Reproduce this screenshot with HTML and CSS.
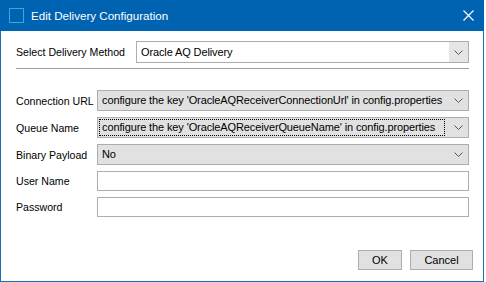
FILE: index.html
```html
<!DOCTYPE html>
<html>
  <head>
    <title>Edit Delivery Configuration</title>
    <link rel="stylesheet" href="styles.css">
  </head>
  <body>
    <div class="window">
      <div class="titlebar">
        <span class="app-icon"></span>
        <span class="title">Edit Delivery Configuration</span>
        <svg class="close" width="11" height="11" viewBox="0 0 11 11">
          <path d="M0.5 0.5 L10.5 10.5 M10.5 0.5 L0.5 10.5" stroke="#fff" stroke-width="1.2" fill="none"/>
        </svg>
      </div>

      <div class="content">
        <div class="method-row">
          <label>Select Delivery Method</label>
          <div class="combo combo-white">
            <span class="combo-text">Oracle AQ Delivery</span>
            <span class="combo-btn">
              <svg width="9" height="5" viewBox="0 0 9 5"><path d="M0.5 0.5 L4.5 4.5 L8.5 0.5" stroke="#555" fill="none"/></svg>
            </span>
          </div>
        </div>

        <div class="separator"></div>

        <div class="fields">
          <label>Connection URL</label>
          <div class="combo">
            <span class="combo-text">configure the key 'OracleAQReceiverConnectionUrl' in config.properties</span>
            <span class="combo-btn">
              <svg width="9" height="5" viewBox="0 0 9 5"><path d="M0.5 0.5 L4.5 4.5 L8.5 0.5" stroke="#555" fill="none"/></svg>
            </span>
          </div>

          <label>Queue Name</label>
          <div class="combo">
            <span class="combo-text focused">configure the key 'OracleAQReceiverQueueName' in config.properties</span>
            <span class="combo-btn">
              <svg width="9" height="5" viewBox="0 0 9 5"><path d="M0.5 0.5 L4.5 4.5 L8.5 0.5" stroke="#555" fill="none"/></svg>
            </span>
          </div>

          <label>Binary Payload</label>
          <div class="combo">
            <span class="combo-text">No</span>
            <span class="combo-btn">
              <svg width="9" height="5" viewBox="0 0 9 5"><path d="M0.5 0.5 L4.5 4.5 L8.5 0.5" stroke="#555" fill="none"/></svg>
            </span>
          </div>

          <label>User Name</label>
          <div class="textbox"></div>

          <label>Password</label>
          <div class="textbox"></div>
        </div>

        <div class="buttons">
          <button class="btn btn-ok">OK</button>
          <button class="btn btn-cancel">Cancel</button>
        </div>
      </div>
    </div>
  </body>
</html>
```

FILE: styles.css
```css
body { margin: 0; background: #fff; font-family: "Liberation Sans", Arial, sans-serif; font-size: 11px; color: #000; }

label { white-space: nowrap; font-size: 10.6px; }

.window {
    width: 484px;
    height: 282px;
    box-sizing: border-box;
    border: 1px solid #1c70b8;
    border-top: none;
    display: flex;
    flex-direction: column;
    background: #fff;
}

.titlebar {
    height: 31px;
    background: #0063b1;
    display: flex;
    align-items: center;
    padding: 0 9px 0 9px;
    margin: 0 -1px;
    color: #fff;
    flex-shrink: 0;
}
.app-icon {
    width: 13px;
    height: 13px;
    border: 1px solid #2fb0cf;
    margin-right: 7px;
    margin-top: -1px;
}
.title { font-size: 11.6px; flex-grow: 1; margin-top: -1px; }
.close { margin-right: 1px; margin-top: -1px; }

.content {
    flex-grow: 1;
    display: flex;
    flex-direction: column;
    padding: 10px 10px 11px 15px;
}

.method-row {
    display: grid;
    grid-template-columns: 120px 333px;
    align-items: center;
}

.separator {
    width: 453px;
    height: 1px;
    background: #a0a0a0;
    border-bottom: 1px solid #fff;
    margin-top: 5px;
}

.fields {
    display: grid;
    grid-template-columns: 81px 372px;
    grid-auto-rows: auto;
    row-gap: 6px;
    align-items: center;
    margin-top: 20px;
}

.combo {
    height: 21px;
    box-sizing: border-box;
    border: 1px solid #adadad;
    background: #e1e1e1;
    display: flex;
    align-items: center;
}
.combo-white { height: 22px; background: #fff; }
.combo-text {
    flex-grow: 1;
    padding: 0 2px;
    margin-left: 1px;
    line-height: 15px;
    letter-spacing: -0.12px;
    white-space: nowrap;
    overflow: hidden;
    border: 1px dotted transparent;
}
.combo-text.focused { border-color: #000; margin-right: 4px; }
.combo-btn {
    width: 19px;
    height: 100%;
    display: flex;
    align-items: center;
    justify-content: center;
    flex-shrink: 0;
}
.combo-white .combo-btn { background: #e5e5e5; }

.textbox {
    height: 20px;
    box-sizing: border-box;
    border: 1px solid #adadad;
    background: #fff;
}

.buttons {
    margin-top: auto;
    display: flex;
    justify-content: flex-end;
    gap: 8px;
}
.btn {
    height: 20px;
    box-sizing: border-box;
    border: 1px solid #adadad;
    background: #e1e1e1;
    font-family: inherit;
    font-size: 11px;
    color: #000;
    padding: 0;
}
.btn-ok { width: 44px; }
.btn-cancel { width: 63px; }
```
